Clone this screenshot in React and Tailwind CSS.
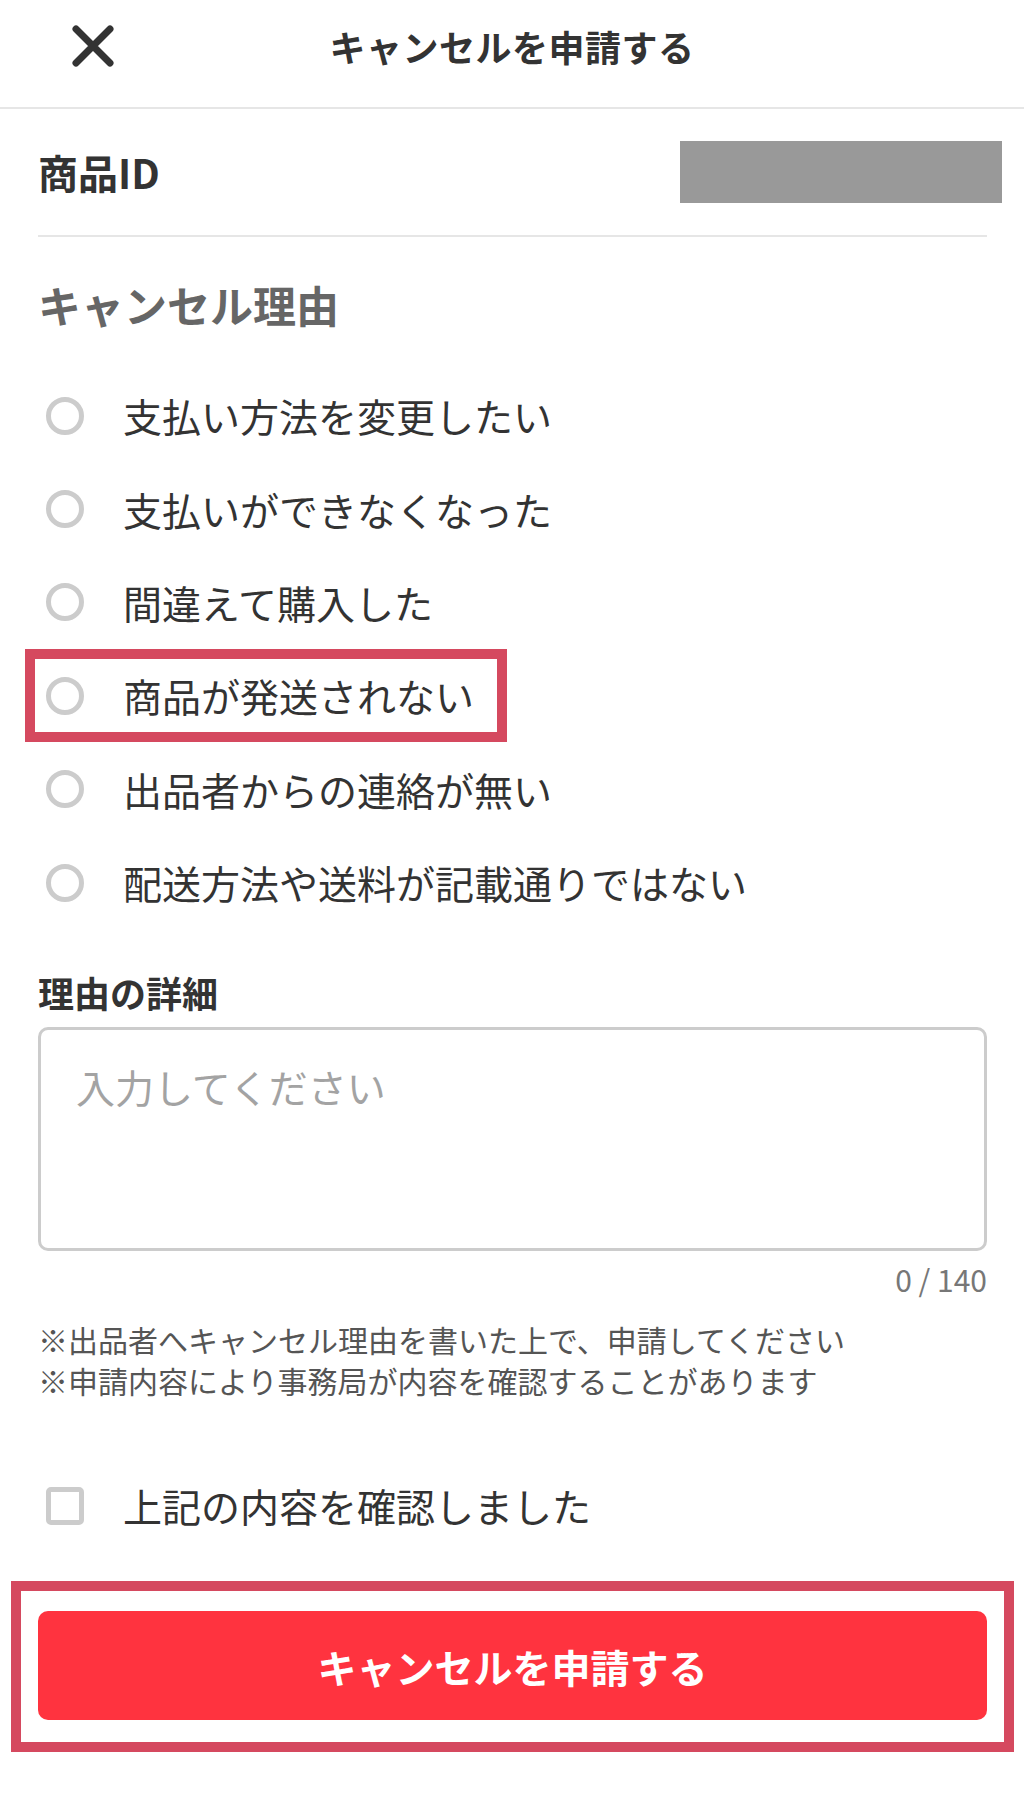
import { useState } from 'react';

const REASONS = [
  '支払い方法を変更したい',
  '支払いができなくなった',
  '間違えて購入した',
  '商品が発送されない',
  '出品者からの連絡が無い',
  '配送方法や送料が記載通りではない',
];

const FONT = { fontFamily: '"Noto Sans CJK JP", "Noto Sans", sans-serif' };

export default function App() {
  const [reason, setReason] = useState(null);
  const [detail, setDetail] = useState('');
  const [agreed, setAgreed] = useState(false);

  return (
    <div className="w-[1024px] min-h-[1806px] bg-white text-[#333]" style={FONT}>
      {/* header */}
      <header className="border-b-2 border-[#e6e6e6]">
        <div className="grid h-[92px] grid-cols-[1fr_auto_1fr] items-center">
          <button className="ml-[71px] flex h-[44px] w-[44px] items-center justify-center">
            <svg viewBox="0 0 44 44" className="h-[44px] w-[44px]" fill="none" stroke="#333" strokeWidth="7" strokeLinecap="round">
              <path d="M5 5 L39 39 M39 5 L5 39" />
            </svg>
          </button>
          <h1 className="text-[36px] leading-none font-semibold tracking-[0.5px]">キャンセルを申請する</h1>
          <div />
        </div>
        <div className="h-[15px]" />
      </header>

      {/* item id */}
      <div className="ml-[38px] mr-[37px] flex h-[128px] items-center justify-between border-b-2 border-[#e6e6e6]">
        <span className="text-[40px] leading-none font-bold">商品ID</span>
        <div className="-mr-[15px] h-[62px] w-[322px] bg-[#999]" />
      </div>

      {/* reasons */}
      <h2 className="mt-[42px] ml-[38px] text-[43px] leading-[50px] font-semibold text-[#666]">キャンセル理由</h2>
      <ul className="mt-[40px]">
        {REASONS.map((r, i) => (
          <li key={r} className="relative flex h-[93.4px] items-center" onClick={() => setReason(i)}>
            <span className="ml-[46px] flex h-[38px] w-[38px] shrink-0 items-center justify-center rounded-full border-[5px] border-[#cccccc]">
              {reason === i && <span className="h-[16px] w-[16px] rounded-full bg-[#ff333f]" />}
            </span>
            <span className="ml-[39px] text-[39px] leading-none">{r}</span>
            {i === 3 && (
              <span className="pointer-events-none absolute top-[0px] left-[25px] h-[93px] w-[482px] border-[10px] border-[#d5495f]" />
            )}
          </li>
        ))}
      </ul>

      {/* detail */}
      <div className="mx-[37px] ml-[38px]">
        <label className="mt-[41px] block text-[36px] leading-[44px] font-bold">理由の詳細</label>
        <textarea
          value={detail}
          onChange={e => setDetail(e.target.value.slice(0, 140))}
          placeholder="入力してください"
          className="mt-[13px] block h-[224px] w-full resize-none rounded-[10px] border-[3px] border-[#cccccc] px-[35px] py-[28px] text-[39px] leading-[57px] placeholder:text-[#a3a3a3] focus:outline-none"
          style={FONT}
        />
        <p className="mt-[8px] text-right text-[30px] leading-[40px] text-[#777]">{detail.length} / 140</p>
        <div className="mt-[20px] text-[30px] leading-[41px] text-[#555]">
          <p>※出品者へキャンセル理由を書いた上で、申請してください</p>
          <p>※申請内容により事務局が内容を確認することがあります</p>
        </div>
      </div>

      {/* confirm */}
      <label className="mt-[58px] flex h-[93px] items-center" onClick={() => setAgreed(a => !a)}>
        <span className="ml-[46px] flex h-[38px] w-[38px] shrink-0 items-center justify-center rounded-[5px] border-[5px] border-[#cccccc]">
          {agreed && <span className="h-[16px] w-[16px] rounded-[2px] bg-[#ff333f]" />}
        </span>
        <span className="ml-[39px] text-[39px] leading-none">上記の内容を確認しました</span>
      </label>

      {/* submit */}
      <div className="relative mx-[37px] ml-[38px] mt-[59px]">
        <button className="flex h-[109px] w-full items-center justify-center rounded-[10px] bg-[#ff333f] text-[39px] font-bold text-white">
          キャンセルを申請する
        </button>
        <span className="pointer-events-none absolute -top-[30px] -left-[27px] h-[171px] w-[1003px] border-[10px] border-[#d5495f]" />
      </div>
    </div>
  );
}
